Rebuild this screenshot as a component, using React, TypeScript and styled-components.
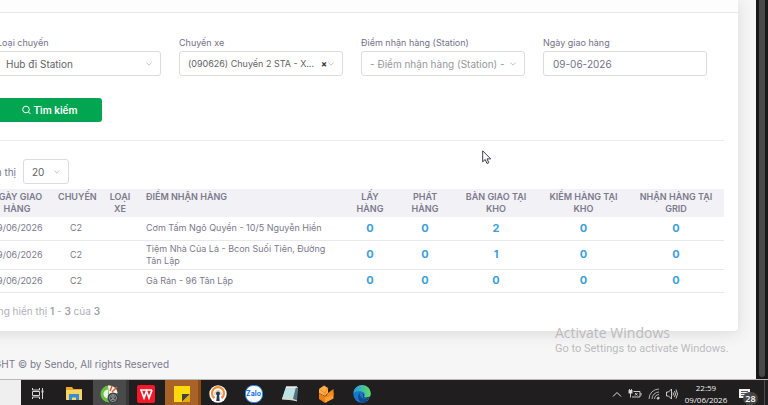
import React from "react";
import styled, { createGlobalStyle, css } from "styled-components";

const GlobalStyle = createGlobalStyle`
  *, *::before, *::after { box-sizing: border-box; }
  body { margin: 0; background: #f5f5f6; overflow: hidden; }
  body, button, input, select { font-family: Inter, "Noto Sans", sans-serif; }
`;

const Screen = styled.div`
  position: relative;
  display: flex;
  flex-direction: column;
  min-height: 100vh;
  overflow: hidden;
  color: #7b798c;
`;

const Workspace = styled.div`
  flex: 1;
  display: flex;
  border-bottom: 1px solid #b9b9b9;
`;

const Page = styled.main`
  flex: 1;
  min-width: 0;
  overflow: hidden;
  background: #f6f6f7;
`;

const Card = styled.section`
  margin: 0 18px 0 -34px;
  padding-bottom: 12px;
  background: #fff;
  border-radius: 0 0 4px 4px;
  box-shadow: 0 2px 16px rgba(60, 60, 70, 0.15);
`;

const CardHeader = styled.header`
  height: 13px;
  background: #fdfdfe;
  border-bottom: 1px solid #e6e6ee;
`;

const CardBody = styled.div`
  padding: 0 14px;
`;

const SearchForm = styled.form`
  padding: 24px 17px 18px;
  border-bottom: 1px solid #ececf0;
`;

const Fields = styled.div`
  display: grid;
  grid-template-columns: repeat(4, 1fr);
  gap: 18px;
`;

const Field = styled.div`
  display: flex;
  flex-direction: column;
  min-width: 0;
`;

const Label = styled.label`
  height: 14px;
  font-size: 9px;
  line-height: 12px;
  white-space: nowrap;
  color: #74718a;
`;

const control = css`
  width: 100%;
  height: 25px;
  border: 1px solid #dcdbe3;
  border-radius: 3px;
  background: #fff;
  outline: none;
`;

const SelectBox = styled.div`
  position: relative;
  display: flex;
  align-items: center;
`;

const Select = styled.select<{ $muted?: boolean; $compact?: boolean }>`
  ${control}
  padding: 0 8px;
  font-size: ${(p) => (p.$compact ? "9px" : "10px")};
  appearance: none;
  color: ${(p) => (p.$muted ? "#98989c" : "#626267")};
`;

const TextInput = styled.input`
  ${control}
  padding: 0 9px;
  font-size: 10px;
  color: #74728a;
`;

const ChevronSlot = styled.span`
  position: absolute;
  right: 9px;
  display: flex;
  pointer-events: none;
`;

const ClearButton = styled.button`
  position: absolute;
  right: 16px;
  padding: 0;
  border: 0;
  background: none;
  color: #333;
  font-size: 9px;
  font-weight: 700;
  line-height: 10px;
`;

const SearchButton = styled.button`
  display: flex;
  align-items: center;
  justify-content: center;
  gap: 3px;
  width: 105px;
  height: 24px;
  margin-top: 22px;
  border: 0;
  border-radius: 3px;
  background: #02a651;
  color: #fff;
  font-size: 10px;
  font-weight: 600;
`;

const PageSize = styled.div`
  display: flex;
  align-items: center;
  padding: 18px 0 5px;
`;

const PageSizeLabel = styled.label`
  width: 43px;
  padding-right: 7px;
  display: flex;
  justify-content: flex-end;
  font-size: 10px;
  white-space: nowrap;
`;

const PageSizeBox = styled(SelectBox)`
  width: 46px;
`;

const Table = styled.table`
  width: 100%;
  table-layout: fixed;
  border-collapse: collapse;
  line-height: 12px;
`;

const Col = styled.col<{ $width?: number }>`
  width: ${(p) => (p.$width ? `${p.$width}px` : "auto")};
`;

const HeadRow = styled.tr`
  height: 28px;
  background: #f2f1f6;
`;

const HeadCell = styled.th<{ $left?: boolean; $narrow?: boolean }>`
  padding: 2px ${(p) => (p.$narrow ? "8px" : "4px")};
  font-size: 9px;
  font-weight: 600;
  text-align: ${(p) => (p.$left ? "left" : "center")};
  vertical-align: top;
`;

const Row = styled.tr`
  height: 23px;
  border-bottom: 1px solid #e8e7ec;
`;

const Cell = styled.td<{ $left?: boolean }>`
  padding: 2px 4px;
  font-size: 9px;
  text-align: ${(p) => (p.$left ? "left" : "center")};
`;

const Count = styled.a`
  color: #3c9fd9;
  font-size: 11px;
  font-weight: 700;
  text-decoration: none;
`;

const Summary = styled.p`
  display: flex;
  justify-content: flex-end;
  width: 120px;
  margin: 10px 0 0;
  font-size: 10px;
  line-height: 16px;
  white-space: pre;
  color: #b0afb9;
`;

const Strong = styled.strong`
  font-weight: 600;
  color: #a09fae;
`;

const Footer = styled.footer`
  display: flex;
  justify-content: flex-end;
  width: 169px;
  padding: 26px 0 8px;
  font-size: 10px;
  line-height: 14px;
  white-space: nowrap;
`;

const Scrollbar = styled.div`
  width: 12px;
  padding: 0 3px 2px;
  background: #171817;
  display: flex;
`;

const Thumb = styled.div`
  flex: 1;
  border-radius: 0 0 3px 3px;
  background: #484948;
`;

const Watermark = styled.aside`
  position: absolute;
  right: 41px;
  bottom: 49px;
  width: 172px;
  font-family: Roboto, "Noto Sans", sans-serif;
  font-size: 11px;
  line-height: 14px;
  white-space: nowrap;
  color: #bbb;
`;

const WatermarkTitle = styled.div`
  font-family: "Open Sans", "Noto Sans", sans-serif;
  font-size: 14px;
  line-height: 19px;
`;

const Pointer = styled.svg`
  position: absolute;
  left: 482px;
  top: 150px;
`;

const Taskbar = styled.nav`
  display: flex;
  height: 25px;
  background: #201e1f;
`;

const Corner = styled.div`
  width: 21px;
  background: #efefef;
`;

const TaskButton = styled.button<{ $tone?: "active" | "alert" }>`
  width: 36px;
  padding: 4px 0 0;
  border: 0;
  border-right: 3px solid
    ${(p) => (p.$tone === "active" ? "#383838" : p.$tone === "alert" ? "#8c4a15" : "transparent")};
  display: flex;
  justify-content: center;
  background: ${(p) => (p.$tone === "active" ? "#4a4a4a" : p.$tone === "alert" ? "#a96228" : "none")};
  background-clip: padding-box;
`;

const Tray = styled.div`
  margin-left: auto;
  display: flex;
  align-items: center;
  gap: 6px;
  padding: 2px 4px 0 0;
  border-right: 1px solid #4b4b4b;
  margin-right: 3px;
`;

const Clock = styled.time`
  width: 44px;
  margin-right: 4px;
  font-family: "Open Sans", "Noto Sans", sans-serif;
  font-size: 8px;
  line-height: 12px;
  text-align: center;
  white-space: nowrap;
  color: #f2f2f2;
`;

const Notice = styled.div`
  position: relative;
  width: 22px;
  height: 18px;
`;

const Badge = styled.span`
  position: absolute;
  right: 2px;
  bottom: -2px;
  width: 15px;
  height: 13px;
  border-radius: 7px;
  background: #464646;
  color: #fff;
  font: 600 9px/13px "Open Sans", sans-serif;
  text-align: center;
`;

function Chevron() {
  return (
    <ChevronSlot>
      <svg width="6" height="5" viewBox="0 0 6 5" fill="none" stroke="#b8b8bd" strokeWidth="0.8">
        <path d="M.5 1.500 3 4.200 5.500 1.500" />
      </svg>
    </ChevronSlot>
  );
}

type SelectFieldProps = { id: string; label: string; value: string; muted?: boolean; clearable?: boolean };

function SelectField({ id, label, value, muted, clearable }: SelectFieldProps) {
  return (
    <Field>
      <Label htmlFor={id}>{label}</Label>
      <SelectBox>
        <Select id={id} $muted={muted} $compact={clearable}>
          <option>{value}</option>
        </Select>
        {clearable && <ClearButton type="button" aria-label="Xóa">×</ClearButton>}
        <Chevron />
      </SelectBox>
    </Field>
  );
}

const columns: { title: string; width?: number; left?: boolean; narrow?: boolean }[] = [
  { title: "NGÀY GIAO HÀNG", width: 74 },
  { title: "CHUYẾN", width: 44 },
  { title: "LOẠI XE", width: 44, narrow: true },
  { title: "ĐIỂM NHẬN HÀNG", left: true },
  { title: "LẤY HÀNG", width: 54 },
  { title: "PHÁT HÀNG", width: 56 },
  { title: "BÀN GIAO TẠI KHO", width: 86 },
  { title: "KIỂM HÀNG TẠI KHO", width: 89 },
  { title: "NHẬN HÀNG TẠI GRID", width: 96 },
];

const rows = [
  { place: "Cơm Tấm Ngô Quyền - 10/5 Nguyễn Hiền", counts: [0, 0, 2, 0, 0] },
  { place: "Tiệm Nhà Của Lá - Bcon Suối Tiên, Đường Tân Lập", counts: [0, 0, 1, 0, 0] },
  { place: "Gà Rán - 96 Tân Lập", counts: [0, 0, 0, 0, 0] },
];

function TaskViewIcon() {
  return (
    <svg width="14" height="20" viewBox="0 0 14 20" fill="none" stroke="#d8d8d8">
      <path d="M1.500 4v2h7V4M1.500 15v-2h7v2M1.500 7.500h7v4h-7zM11.500 4v11" />
      <path d="M10.500 7.500h2" strokeWidth="2" />
    </svg>
  );
}

function FolderIcon() {
  return (
    <svg width="16" height="20" viewBox="0 0 16 20">
      <path d="M0 3h6l1.500 2H16v11H0z" fill="#e9aa2c" />
      <path d="M0 6h16v10H0z" fill="#fcd462" />
      <path d="M3 16v-6h10v6h-3v-2.500H6V16z" fill="#348fd8" />
    </svg>
  );
}

function ChromiumIcon() {
  return (
    <svg width="19" height="20" viewBox="0 0 19 20">
      <circle cx="9" cy="10" r="8.500" fill="#65c044" />
      <path d="M9 10 8 1.500A8.500 8.500 0 0 1 17.500 9z" fill="#f5f5ee" />
      <path d="m10 7 2-5M12 8l5-5" stroke="#e2573b" strokeWidth="1.500" />
      <path d="M8 5.500a4.500 4.500 0 1 0 2 8.500L8 10z" fill="#e9f4df" />
      <circle cx="13" cy="14" r="5.500" fill="#3c4044" />
      <circle cx="13" cy="14" r="3.500" fill="none" stroke="#a5a9ab" strokeWidth=".8" />
      <circle cx="13" cy="13" r="1.300" fill="none" stroke="#b5b7b8" strokeWidth=".8" />
      <path d="M11 16q2-2 4 0" fill="none" stroke="#b5b7b8" strokeWidth=".8" />
    </svg>
  );
}

function WpsIcon() {
  return (
    <svg width="18" height="20" viewBox="0 0 18 20">
      <rect y="1" width="18" height="18" rx="2" fill="#f71728" />
      <path d="M3 6h12M4 6l3 8 2.500-7L12 14l3-8" fill="none" stroke="#fff" strokeWidth="1.700" />
    </svg>
  );
}

function StickyIcon() {
  return (
    <svg width="16" height="20" viewBox="0 0 16 20">
      <path d="M0 2h16v16H0z" fill="#fcd80d" />
      <path d="M8 10h8l-8 8z" fill="#414044" />
      <path d="M16 10v8H8z" fill="#e5ac0c" />
    </svg>
  );
}

function VpnIcon() {
  return (
    <svg width="18" height="20" viewBox="0 0 18 20">
      <circle cx="9" cy="10" r="8.700" fill="#fff" />
      <path d="M5.500 14a6 6 0 1 1 7 0" fill="none" stroke="#ee9037" strokeWidth="2.200" />
      <path d="M6 11a3.200 3.200 0 1 1 6 0" fill="none" stroke="#efaa68" />
      <circle cx="9" cy="9.500" r="2" fill="#1d345c" />
      <path d="M8 10h2l.7 7H7.300z" fill="#1d345c" />
    </svg>
  );
}

const ZaloMark = styled.span`
  width: 18px;
  height: 18px;
  margin-top: 1px;
  border: 1px solid #2488ee;
  border-radius: 8px;
  background: #fff;
  color: #1473e6;
  font: 700 7px/16px Inter, sans-serif;
  text-align: center;
`;

function NotepadIcon() {
  return (
    <svg width="18" height="20" viewBox="0 0 18 20">
      <path d="M5 3h12l-2 14-14-2z" fill="#8bc8d1" />
      <path d="M5 3h10l-3 12-11 0z" fill="#bce2e5" />
      <path d="m15 3 2 1-1 13-4-2z" fill="#53717c" />
      <path d="M5 3h11" stroke="#ececec" strokeWidth="1.500" />
      <path d="m1 15 11 .5 4 1.500" stroke="#e5d9c0" fill="none" />
    </svg>
  );
}

function BoxIcon() {
  return (
    <svg width="16" height="20" viewBox="0 0 16 20">
      <path d="M6 1.500 10 4v5l-3 3-6-3V5z" fill="#ffb04a" />
      <path d="m1 9 6 3.500V19l-6-4z" fill="#f17e12" />
      <path d="m7 12.500 8.500-4v6L7 19z" fill="#ffa02d" />
      <path d="m10 9 5.500-4v6L7 14z" fill="#f58919" />
      <path d="m1 5 6 4v4M10 4 7 9" stroke="#e67811" fill="none" strokeWidth=".7" />
    </svg>
  );
}

function EdgeIcon() {
  return (
    <svg width="18" height="20" viewBox="0 0 18 20">
      <defs>
        <linearGradient id="edgeTop" x1="0" x2="1">
          <stop offset="0" stopColor="#269be7" />
          <stop offset="1" stopColor="#63dc61" />
        </linearGradient>
      </defs>
      <circle cx="9" cy="10" r="8.700" fill="#1578cb" />
      <path d="M.5 9a8.600 8.600 0 0 1 17.200 1c0 4-5 4.500-7 3 2-2 1-5-2-5.500C5 7 2 7.500.5 9z" fill="url(#edgeTop)" />
      <path d="M7 9c-1 4 3 7 9 5.500-1 2-3.500 4-6.500 4C5 18 3.500 12 7 9z" fill="#104a91" />
      <path d="M9 9.500c1.500 0 2 2 1 3.500 1 1.500 4 2 7 .5v-1c-2 1.500-5 1.500-6.500.5 1.500-2 0-4-1.500-3.500z" fill="#201e1f" />
    </svg>
  );
}

const apps: { name: string; icon: React.ReactNode; tone?: "active" | "alert" }[] = [
  { name: "Task View", icon: <TaskViewIcon /> },
  { name: "File Explorer", icon: <FolderIcon /> },
  { name: "Cốc Cốc", icon: <ChromiumIcon />, tone: "active" },
  { name: "WPS Office", icon: <WpsIcon /> },
  { name: "Sticky Notes", icon: <StickyIcon />, tone: "alert" },
  { name: "OpenVPN", icon: <VpnIcon /> },
  { name: "Zalo", icon: <ZaloMark>Zalo</ZaloMark> },
  { name: "Notepad", icon: <NotepadIcon /> },
  { name: "Kho", icon: <BoxIcon /> },
  { name: "Edge", icon: <EdgeIcon /> },
];

export default function App() {
  return (
    <Screen>
      <GlobalStyle />
      <Workspace>
        <Page>
          <Card>
            <CardHeader />
            <CardBody>
              <SearchForm onSubmit={(e) => e.preventDefault()}>
                <Fields>
                  <SelectField id="type" label="Loại chuyến" value="Hub đi Station" />
                  <SelectField id="trip" label="Chuyến xe" value="(090626) Chuyến 2 STA - X..." clearable />
                  <SelectField id="station" label="Điểm nhận hàng (Station)" value="- Điểm nhận hàng (Station) -" muted />
                  <Field>
                    <Label htmlFor="date">Ngày giao hàng</Label>
                    <TextInput id="date" defaultValue="09-06-2026" />
                  </Field>
                </Fields>
                <SearchButton type="submit">
                  <svg width="9" height="10" viewBox="0 0 9 10" fill="none" stroke="#fff">
                    <circle cx="4" cy="4.500" r="3.300" />
                    <path d="m6.500 7 2 2" />
                  </svg>
                  Tìm kiếm
                </SearchButton>
              </SearchForm>
              <PageSize>
                <PageSizeLabel htmlFor="size">Hiển thị</PageSizeLabel>
                <PageSizeBox>
                  <Select id="size">
                    <option>20</option>
                  </Select>
                  <Chevron />
                </PageSizeBox>
              </PageSize>
              <Table>
                <colgroup>
                  {columns.map((c) => (
                    <Col key={c.title} $width={c.width} />
                  ))}
                </colgroup>
                <thead>
                  <HeadRow>
                    {columns.map((c) => (
                      <HeadCell key={c.title} $left={c.left} $narrow={c.narrow}>
                        {c.title}
                      </HeadCell>
                    ))}
                  </HeadRow>
                </thead>
                <tbody>
                  {rows.map((r) => (
                    <Row key={r.place}>
                      <Cell>09/06/2026</Cell>
                      <Cell>C2</Cell>
                      <Cell />
                      <Cell $left>{r.place}</Cell>
                      {r.counts.map((n, i) => (
                        <Cell key={i}>
                          <Count href="#">{n}</Count>
                        </Cell>
                      ))}
                    </Row>
                  ))}
                </tbody>
              </Table>
              <Summary>
                Đang hiển thị <Strong>1</Strong> - <Strong>3</Strong> của <Strong>3</Strong>
              </Summary>
            </CardBody>
          </Card>
          <Footer>COPYRIGHT © by Sendo, All rights Reserved</Footer>
        </Page>
        <Scrollbar>
          <Thumb />
        </Scrollbar>
      </Workspace>
      <Taskbar>
        <Corner />
        {apps.map((a) => (
          <TaskButton key={a.name} aria-label={a.name} $tone={a.tone}>
            {a.icon}
          </TaskButton>
        ))}
        <Tray>
          <svg width="10" height="8" viewBox="0 0 10 8" fill="none" stroke="#e5e5e5">
            <path d="m1 6.500 4-4 4 4" />
          </svg>
          <svg width="14" height="12" viewBox="0 0 14 12" fill="none" stroke="#dcdcdc" strokeWidth=".9">
            <path d="M5.500 3.500h6.500v5.500H4M13 5v2.500M1.500 1v1.500M3.500 1v1.500M2.500 5v4.500M7 5l2.500 2.500m0-2.500L7 7.500" />
            <rect x="1" y="2.500" width="3" height="2.500" fill="#dcdcdc" />
          </svg>
          <svg width="12" height="12" viewBox="0 0 12 12" fill="none" stroke="#bfbfbf" strokeWidth=".9">
            <path d="M1 11A10 10 0 0 1 11 1M4 11a7 7 0 0 1 7-7M6.500 11A4.500 4.500 0 0 1 11 6.500" />
            <path d="M9 11a2 2 0 0 1 2-2v2z" fill="#eee" />
          </svg>
          <svg width="12" height="12" viewBox="0 0 12 12" fill="none" stroke="#dcdcdc" strokeWidth=".9">
            <path d="M.5 4v4h2l3 3V1l-3 3zM7 4.500q1 1.500 0 3M8.500 3q2 3 0 6M10 1.500q3 4.500 0 9" />
          </svg>
          <Clock>
            22:59
            <br />
            09/06/2026
          </Clock>
          <Notice>
            <svg width="13" height="13" viewBox="0 0 13 13">
              <path d="M1 1h11v9H8l-2 2v-2H1z" fill="#f2f2f2" />
              <path d="M3 3.500h7M3 5.500h7M3 7.500h5" stroke="#333" strokeWidth=".8" />
            </svg>
            <Badge>28</Badge>
          </Notice>
        </Tray>
      </Taskbar>
      <Watermark>
        <WatermarkTitle>Activate Windows</WatermarkTitle>
        Go to Settings to activate Windows.
      </Watermark>
      <Pointer width="10" height="15" viewBox="0 0 10 15">
        <path d="M.7.8v11l2.500-2.300 1.800 4 1.800-.8L5 8.900h3.700z" fill="#fff" stroke="#3a3b45" strokeWidth="1" />
      </Pointer>
    </Screen>
  );
}
